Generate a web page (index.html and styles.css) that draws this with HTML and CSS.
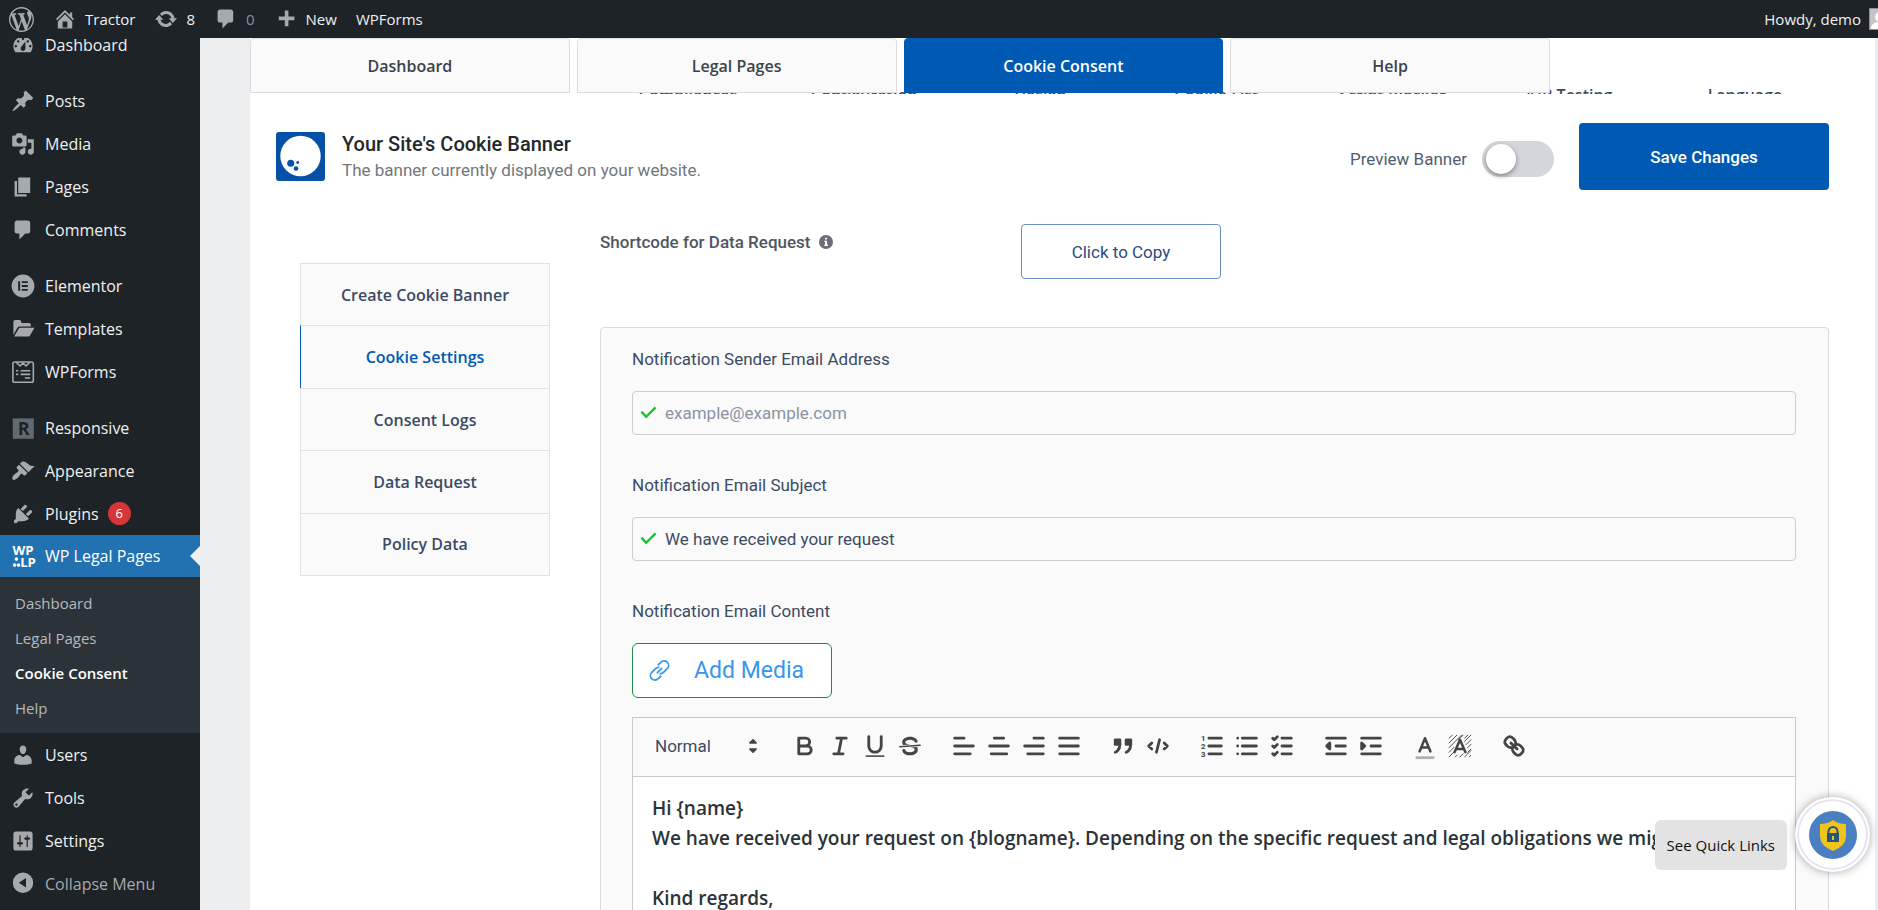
FILE: index.html
```html
<!DOCTYPE html>
<html lang="en">
<head>
  <meta charset="UTF-8">
  <meta name="viewport" content="width=device-width, initial-scale=1.0">
  <title>Cookie Consent - Tractor</title>
  <link rel="stylesheet" href="styles.css">
</head>
<body>
  <!-- Top admin bar -->
  <header class="admin-bar">
    <a class="bar-item" href="#" aria-label="About WordPress">
      <svg class="bar-logo" viewBox="0 0 20 20"><path d="M20 10c0-5.51-4.49-10-10-10C4.48 0 0 4.49 0 10c0 5.52 4.48 10 10 10 5.51 0 10-4.48 10-10zM7.78 15.37L4.37 6.22c.55-.02 1.17-.08 1.17-.08.5-.06.44-1.13-.06-1.11 0 0-1.45.11-2.37.11-.18 0-.37 0-.58-.01C4.12 2.69 6.87 1.11 10 1.11c2.33 0 4.45.87 6.05 2.34-.68-.11-1.65.39-1.65 1.58 0 .74.45 1.36.9 2.1.35.61.55 1.36.55 2.46 0 1.49-1.4 5-1.4 5l-3.03-8.37c.54-.02.82-.17.82-.17.5-.05.44-1.25-.06-1.22 0 0-1.44.12-2.38.12-.87 0-2.33-.12-2.33-.12-.5-.03-.56 1.2-.06 1.22l.92.08 1.26 3.41zM17.41 10c.24-.64.74-1.87.43-4.25.7 1.29 1.05 2.71 1.05 4.25 0 3.29-1.73 6.24-4.4 7.78.97-2.59 1.94-5.2 2.92-7.78zM6.1 18.09C3.12 16.65 1.11 13.53 1.11 10c0-1.3.23-2.48.72-3.59C3.25 10.3 4.67 14.2 6.1 18.09zm4.03-6.63l2.58 6.98c-.86.29-1.76.45-2.71.45-.79 0-1.57-.11-2.29-.33.81-2.38 1.62-4.74 2.42-7.1z"/></svg>
    </a>
    <a class="bar-item" href="#">
      <svg viewBox="0 0 20 20"><path d="M16 8.5l1.53 1.53-1.06 1.06L10 4.6l-6.47 6.49-1.06-1.06L10 2.5l4 4v-2h2v4zm-6-2.46l6 5.99V18H4v-5.97zM12 17v-5H8v5h4z"/></svg>
      Tractor
    </a>
    <a class="bar-item" href="#">
      <svg viewBox="0 0 20 20"><path d="M10.2 3.28c3.53 0 6.43 2.61 6.92 6h2.08l-3.5 4-3.5-4h2.32c-.45-1.97-2.21-3.45-4.32-3.45-1.45 0-2.73.71-3.54 1.78L4.95 5.66C6.23 4.2 8.11 3.28 10.2 3.28zm-.4 13.44c-3.52 0-6.43-2.61-6.92-6H.8l3.5-4c1.17 1.33 2.33 2.67 3.5 4H5.48c.45 1.97 2.21 3.45 4.32 3.45 1.45 0 2.73-.71 3.54-1.78l1.71 1.95c-1.28 1.46-3.15 2.38-5.25 2.38z"/></svg>
      8
    </a>
    <a class="bar-item muted" href="#">
      <svg viewBox="0 0 20 20"><path d="M5 2h9c1.1 0 2 .9 2 2v7c0 1.1-.9 2-2 2h-2l-5 5v-5H5c-1.1 0-2-.9-2-2V4c0-1.1.9-2 2-2z"/></svg>
      0
    </a>
    <a class="bar-item" href="#">
      <svg viewBox="0 0 20 20"><path d="M17 8v3h-5v5H9v-5H4V8h5V3h3v5h5z"/></svg>
      New
    </a>
    <a class="bar-item" href="#">WPForms</a>
    <a class="bar-item account" href="#">
      Howdy, demo
      <span class="avatar"><svg viewBox="0 0 20 20"><circle cx="10" cy="8" r="5"/><path d="M1 20c0-5 4-7 9-7s9 2 9 7z"/></svg></span>
    </a>
  </header>

  <div class="shell">
    <!-- Admin menu -->
    <nav class="admin-menu">
      <ul class="menu-list">
        <li><a class="menu-item" href="#"><svg viewBox="0 0 20 20"><path d="M3.76 16h12.48c1.1-1.37 1.76-3.11 1.76-5 0-4.42-3.58-8-8-8s-8 3.58-8 8c0 1.89.66 3.63 1.76 5zM10 4c.55 0 1 .45 1 1s-.45 1-1 1-1-.45-1-1 .45-1 1-1zM6 6c.55 0 1 .45 1 1s-.45 1-1 1-1-.45-1-1 .45-1 1-1zm8 0c.55 0 1 .45 1 1s-.45 1-1 1-1-.45-1-1 .45-1 1-1zm-5.37 5.55L12 7v6c0 1.1-.9 2-2 2s-2-.9-2-2c0-.57.24-1.08.63-1.45zM4 10c.55 0 1 .45 1 1s-.45 1-1 1-1-.45-1-1 .45-1 1-1zm12 0c.55 0 1 .45 1 1s-.45 1-1 1-1-.45-1-1 .45-1 1-1z"/></svg>Dashboard</a></li>
        <li class="gap"><a class="menu-item" href="#"><svg viewBox="0 0 20 20"><path d="M10.44 3.02l1.82-1.82 6.36 6.35-1.83 1.82c-1.05-.68-2.48-.57-3.41.36l-.75.75c-.92.93-1.04 2.35-.35 3.41l-1.83 1.82-2.41-2.41-2.8 2.79c-.42.42-3.38 2.71-3.8 2.29s1.86-3.39 2.28-3.81l2.79-2.79L4.1 9.36l1.83-1.82c1.05.69 2.48.57 3.4-.36l.75-.75c.93-.92 1.05-2.35.36-3.41z"/></svg>Posts</a></li>
        <li><a class="menu-item" href="#"><svg viewBox="0 0 20 20"><path d="M13 11V4c0-.55-.45-1-1-1h-1.67L9 1H5L3.67 3H2c-.55 0-1 .45-1 1v7c0 .55.45 1 1 1h10c.55 0 1-.45 1-1zM7 4.5c1.38 0 2.5 1.12 2.5 2.5S8.38 9.5 7 9.5 4.5 8.38 4.5 7 5.62 4.5 7 4.5zM14 6h5v10.5c0 1.38-1.12 2.5-2.5 2.5S14 17.88 14 16.5s1.12-2.5 2.5-2.5c.17 0 .34.02.5.05V9h-3V6zm-4 8.05V13h2v3.5c0 1.38-1.12 2.5-2.5 2.5S7 17.88 7 16.5 8.12 14 9.5 14c.17 0 .34.02.5.05z"/></svg>Media</a></li>
        <li><a class="menu-item" href="#"><svg viewBox="0 0 20 20"><path d="M6 15V2h10v13H6zm-1 1h8v2H3V5h2v11z"/></svg>Pages</a></li>
        <li><a class="menu-item" href="#"><svg viewBox="0 0 20 20"><path d="M5 2h9c1.1 0 2 .9 2 2v7c0 1.1-.9 2-2 2h-2l-5 5v-5H5c-1.1 0-2-.9-2-2V4c0-1.1.9-2 2-2z"/></svg>Comments</a></li>
        <li class="gap"><a class="menu-item" href="#"><svg viewBox="0 0 20 20"><path fill-rule="evenodd" d="M10 0.5a9.5 9.5 0 1 0 0 19a9.5 9.5 0 0 0 0-19zM6 6h1.6v8H6zM9 6h5v1.6H9zM9 9.2h5v1.6H9zM9 12.4h5V14H9z"/></svg>Elementor</a></li>
        <li><a class="menu-item" href="#"><svg viewBox="0 0 20 20"><path d="M2 15V4q0-1.5 1.5-1.5H7q1.5 0 1.5 1.5v1H15q1.5 0 1.5 1.5V8H7.5Q6 8 5.2 9.2zM2.6 16.2L6.4 9.8Q6.8 9 7.8 9H19.5L16 15.2Q15.4 16.2 14.3 16.2z"/></svg>Templates</a></li>
        <li><a class="menu-item" href="#"><svg class="outline" viewBox="0 0 20 20"><rect x="1.6" y="1.6" width="17" height="17" rx="1.5"/><path d="M4.500 2l3 3 2.500-2.500L12.500 5l3-3M4.200 9H6M8 9h8M4.200 12H6M8 12h8M11.500 15H16"/></svg>WPForms</a></li>
        <li class="gap"><a class="menu-item" href="#"><svg class="dim" viewBox="0 0 20 20"><rect x="1.5" y="2" width="17.5" height="17"/><text class="letter-dark" x="10.5" y="16" font-size="15">R</text></svg>Responsive</a></li>
        <li><a class="menu-item" href="#"><svg viewBox="0 0 20 20"><path d="M14.48 11.06L7.41 3.99l1.5-1.5c.5-.56 2.3-.47 3.51.32 1.21.8 1.43 1.28 2.91 2.1 1.18.64 2.45 1.26 4.45.85zm-.71.71L6.7 4.7 4.93 6.47c-.39.39-.39 1.02 0 1.41l1.06 1.06c.39.39.39 1.03 0 1.42-.6.6-1.43 1.11-2.21 1.69-.35.26-.7.53-1.01.84C1.43 14.23.4 16.08 1.4 17.07c.99 1 2.84-.03 4.18-1.36.31-.31.58-.66.85-1.02.57-.78 1.08-1.61 1.69-2.21.39-.39 1.02-.39 1.41 0l1.06 1.06c.39.39 1.02.39 1.41 0z"/></svg>Appearance</a></li>
        <li><a class="menu-item" href="#"><svg viewBox="0 0 20 20"><path d="M13.11 4.36L9.87 7.6 8 5.73l3.24-3.24c.35-.34 1.05-.2 1.56.32.52.51.66 1.21.31 1.55zm-8 1.77l.91-1.12 9.01 9.01-1.19.84c-.71.71-2.63 1.16-3.82 1.16H6.14L4.9 17.26c-.59.59-1.54.59-2.12 0-.59-.58-.59-1.53 0-2.12l1.24-1.24v-3.88c0-1.13.4-3.19 1.09-3.89zm7.26 3.97l3.24-3.24c.34-.35 1.04-.21 1.55.31.52.51.66 1.21.31 1.55l-3.24 3.25z"/></svg>Plugins <span class="count">6</span></a></li>
        <li>
          <a class="menu-item current" href="#"><svg viewBox="0 0 20 20"><text class="letter-light" x="10" y="9" font-size="11">WP</text><circle cx="4.5" cy="12.6" r="1.5"/><circle cx="3" cy="17.6" r="1.5"/><circle cx="6.3" cy="17.6" r="1.5"/><text class="letter-light" x="14.2" y="19.2" font-size="11">LP</text></svg>WP Legal Pages</a>
          <ul class="submenu">
            <li><a href="#">Dashboard</a></li>
            <li><a href="#">Legal Pages</a></li>
            <li><a class="selected" href="#">Cookie Consent</a></li>
            <li><a href="#">Help</a></li>
          </ul>
        </li>
        <li><a class="menu-item" href="#"><svg viewBox="0 0 20 20"><path d="M10 9.25c-2.27 0-2.73-3.44-2.73-3.44C7 4.02 7.82 2 9.97 2c2.16 0 2.98 2.02 2.71 3.81 0 0-.41 3.44-2.68 3.44zm0 2.57L12.72 10c2.39 0 4.52 2.33 4.52 4.53v2.49s-3.65 1.13-7.24 1.13c-3.65 0-7.24-1.13-7.24-1.13v-2.49c0-2.25 1.94-4.48 4.47-4.48z"/></svg>Users</a></li>
        <li><a class="menu-item" href="#"><svg viewBox="0 0 20 20"><path d="M16.68 9.77c-1.34 1.34-3.3 1.67-4.95.99l-5.41 6.52c-.99.99-2.59.99-3.58 0s-.99-2.59 0-3.57l6.52-5.42c-.68-1.65-.35-3.61.99-4.95 1.28-1.28 3.12-1.62 4.72-1.06l-2.89 2.89 2.82 2.82 2.86-2.87c.53 1.58.18 3.39-1.08 4.65zM3.81 16.21c.4.39 1.04.39 1.43 0 .4-.4.4-1.04 0-1.43-.39-.4-1.03-.4-1.43 0-.39.39-.39 1.03 0 1.43z"/></svg>Tools</a></li>
        <li><a class="menu-item" href="#"><svg viewBox="0 0 20 20"><path d="M18 16V4c0-1.1-.9-2-2-2H4c-1.1 0-2 .9-2 2v12c0 1.1.9 2 2 2h12c1.1 0 2-.9 2-2zM8 11h1c.55 0 1 .45 1 1s-.45 1-1 1H8v1.5c0 .28-.22.5-.5.5s-.5-.22-.5-.5V13H6c-.55 0-1-.45-1-1s.45-1 1-1h1V5.5c0-.28.22-.5.5-.5s.5.22.5.5V11zm5-2h-1c-.55 0-1-.45-1-1s.45-1 1-1h1V5.5c0-.28.22-.5.5-.5s.5.22.5.5V7h1c.55 0 1 .45 1 1s-.45 1-1 1h-1v5.5c0 .28-.22.5-.5.5s-.5-.22-.5-.5V9z"/></svg>Settings</a></li>
        <li><button class="menu-item collapse" type="button"><svg viewBox="0 0 20 20"><path fill-rule="evenodd" d="M10 0.5a8.5 8.5 0 1 0 0 17a8.5 8.5 0 0 0 0-17zM12.5 5v8L6.5 9z"/></svg>Collapse Menu</button></li>
      </ul>
    </nav>

    <main class="page">
      <nav class="top-tabs">
        <a class="top-tab" href="#">Dashboard</a>
        <a class="top-tab" href="#">Legal Pages</a>
        <a class="top-tab active" href="#">Cookie Consent</a>
        <a class="top-tab" href="#">Help</a>
      </nav>

      <nav class="settings-nav">
        <a class="active" href="#">Compliances</a>
        <a href="#">Configuration</a>
        <a href="#">Design</a>
        <a href="#">Cookie List</a>
        <a href="#">Script Blocker</a>
        <a href="#">A/B Testing</a>
        <a href="#">Language</a>
      </nav>

      <section class="banner-header">
        <svg class="banner-logo" viewBox="0 0 49 49"><rect width="49" height="49" rx="3" fill="#0750a8"/><circle cx="24.5" cy="24" r="20.2" fill="#fff"/><circle cx="14.7" cy="31.3" r="3.5" fill="#0750a8"/><circle cx="20" cy="36.5" r="2.3" fill="#0750a8"/><circle cx="21.7" cy="30.5" r="1.4" fill="#0750a8"/></svg>
        <div class="banner-title">
          <h1>Your Site's Cookie Banner</h1>
          <p>The banner currently displayed on your website.</p>
        </div>
        <label class="preview">
          Preview Banner
          <input class="toggle" type="checkbox">
        </label>
        <button class="save-button" type="button">Save Changes</button>
      </section>

      <div class="settings">
        <nav class="side-tabs">
          <a href="#">Create Cookie Banner</a>
          <a class="active" href="#">Cookie Settings</a>
          <a href="#">Consent Logs</a>
          <a href="#">Data Request</a>
          <a href="#">Policy Data</a>
        </nav>

        <div class="settings-body">
          <div class="shortcode">
            <span class="shortcode-label">Shortcode for Data Request
              <svg viewBox="0 0 16 16"><circle cx="8" cy="8" r="8" fill="#6c6c78"/><path d="M7 3h2.200v2.200H7zM6 6.600h3.200v4.600H10.300v1.500H6v-1.500H7V8H6z" fill="#fff"/></svg>
            </span>
            <button class="copy-button" type="button">Click to Copy</button>
          </div>

          <section class="panel">
            <label class="field-label" for="senderEmail">Notification Sender Email Address</label>
            <div class="field">
              <svg viewBox="0 0 18 14"><path d="M1.5 5.500l5 5.500L16.500 1"/></svg>
              <input type="email" id="senderEmail" placeholder="example@example.com">
            </div>

            <label class="field-label" for="emailSubject">Notification Email Subject</label>
            <div class="field">
              <svg viewBox="0 0 18 14"><path d="M1.5 5.500l5 5.500L16.500 1"/></svg>
              <input type="text" id="emailSubject" value="We have received your request">
            </div>

            <span class="field-label content-label">Notification Email Content</span>
            <button class="media-button" type="button">
              <svg viewBox="0 0 24 24"><path d="M10 6l3.500-3.300a5 5 0 0 1 7.500 7l-4.500 4.500a5 5 0 0 1-4.500 1.300M14 18l-3.500 3.300a5 5 0 0 1-7.500-7l4.500-4.500a5 5 0 0 1 4.500-1.300M9 15l6-6"/></svg>
              Add Media
            </button>

            <div class="editor">
              <div class="toolbar">
                <div class="picker">
                  <select aria-label="Text style"><option>Normal</option></select>
                  <svg viewBox="0 0 18 18"><polygon points="7 11 9 13 11 11"/><polygon points="7 7 9 5 11 7"/></svg>
                </div>
                <div class="tool-group">
                  <button type="button" aria-label="Bold"><svg viewBox="0 0 18 18"><path d="M5 4h4.500a2.500 2.500 0 0 1 0 5H5zM5 9h5.500a2.500 2.500 0 0 1 0 5H5z"/></svg></button>
                  <button type="button" aria-label="Italic"><svg viewBox="0 0 18 18"><path d="M7 4h6M5 14h6M8 14l2-10"/></svg></button>
                  <button type="button" aria-label="Underline"><svg viewBox="0 0 18 18"><path d="M5 3v6a4 4 0 0 0 8 0V3"/><rect class="fill" x="3" y="15" width="12" height="1"/></svg></button>
                  <button type="button" aria-label="Strike"><svg viewBox="0 0 18 18"><path class="thin" d="M2.5 9.5l13-1"/><path class="fill" d="M9.007 8C6.542 7.791 6 7.519 6 6.5 6 5.792 7.283 5 9 5c1.571 0 2.765.679 2.969 1.309a1 1 0 0 0 1.9-.617C13.356 4.106 11.354 3 9 3 6.2 3 4 4.538 4 6.5a3.2 3.2 0 0 0 .5 1.843zM8.984 10C11.457 10.208 12 10.479 12 11.5c0 .708-1.283 1.5-3 1.5-1.571 0-2.765-.679-2.969-1.309a1 1 0 1 0-1.9.617C4.644 13.894 6.646 15 9 15c2.8 0 5-1.538 5-3.5a3.2 3.2 0 0 0-.5-1.843z"/></svg></button>
                </div>
                <div class="tool-group">
                  <button type="button" aria-label="Align left"><svg viewBox="0 0 18 18"><path d="M3 9h12M3 14h10M3 4h6"/></svg></button>
                  <button type="button" aria-label="Align center"><svg viewBox="0 0 18 18"><path d="M3 9h12M4 14h10M6 4h6"/></svg></button>
                  <button type="button" aria-label="Align right"><svg viewBox="0 0 18 18"><path d="M3 9h12M5 14h10M9 4h6"/></svg></button>
                  <button type="button" aria-label="Justify"><svg viewBox="0 0 18 18"><path d="M3 9h12M3 14h12M3 4h12"/></svg></button>
                </div>
                <div class="tool-group">
                  <button type="button" aria-label="Quote"><svg viewBox="0 0 18 18"><path class="solid" d="M4 5h3v3H4zM11 5h3v3h-3z"/><path d="M7 8c0 4.031-3 5-3 5M14 8c0 4.031-3 5-3 5"/></svg></button>
                  <button type="button" aria-label="Code"><svg viewBox="0 0 18 18"><path d="M5 7L3 9l2 2M13 7l2 2-2 2M10 5L8 13"/></svg></button>
                </div>
                <div class="tool-group">
                  <button type="button" aria-label="Numbered list"><svg viewBox="0 0 18 18"><path d="M7 4h8M7 9h8M7 14h8"/><text x="3.4" y="6" font-size="5">1</text><text x="3.4" y="11" font-size="5">2</text><text x="3.4" y="16" font-size="5">3</text></svg></button>
                  <button type="button" aria-label="Bulleted list"><svg viewBox="0 0 18 18"><path d="M6 4h9M6 9h9M6 14h9M3 4h0M3 9h0M3 14h0"/></svg></button>
                  <button type="button" aria-label="Check list"><svg viewBox="0 0 18 18"><path d="M9 4h6M9 9h6M9 14h6M3 4l1 1 2-2M3 9l1 1 2-2M3 14l1 1 2-2"/></svg></button>
                </div>
                <div class="tool-group">
                  <button type="button" aria-label="Outdent"><svg viewBox="0 0 18 18"><path d="M3 14h12M3 4h12M9 9h6"/><path class="solid" d="M5 7v4L3 9z"/></svg></button>
                  <button type="button" aria-label="Indent"><svg viewBox="0 0 18 18"><path d="M3 14h12M3 4h12M9 9h6"/><path class="solid" d="M3 7v4l2-2z"/></svg></button>
                </div>
                <div class="tool-group">
                  <button type="button" aria-label="Text color"><svg viewBox="0 0 18 18"><path class="light" d="M3 16.500h12"/><path class="mid" d="M5.500 12.500L9 4l3.500 8.500M6.500 10h5"/></svg></button>
                  <button type="button" aria-label="Background color"><svg viewBox="0 0 18 18"><path class="hatch" d="M2 4l2-2M2 7l5-5M2 10l8-8M2 13l3-3M2 16l4-4M6 16l1-1M8 5l3-3M12 4l2-2M12 6l4-4M13 8l3-3M14 10l2-2M14 13l2-2M9 16l2-2M12 16l4-4M15 16l1-1"/><path class="mid" d="M5.500 13L9 5l3.500 8M6.500 11h5"/></svg></button>
                </div>
                <div class="tool-group">
                  <button type="button" aria-label="Link"><svg viewBox="0 0 18 18"><path d="M7 7l4 4M8.9 4.577a3.476 3.476 0 0 1 .36 4.679A3.476 3.476 0 0 1 4.577 8.9C3.185 7.5 2.035 6.4 4.217 4.217S7.5 3.185 8.9 4.577zM13.423 9.1a3.476 3.476 0 0 0-4.679-.36 3.476 3.476 0 0 0 .36 4.679c1.392 1.392 2.5 2.542 4.679.36s1.032-3.283-.36-4.679z"/></svg></button>
                </div>
              </div>
              <div class="editor-text" contenteditable="true">
                <p>Hi {name}</p>
                <p>We have received your request on {blogname}. Depending on the specific request and legal obligations we might</p>
                <p><br></p>
                <p>Kind regards,</p>
                <p><br></p>
              </div>
            </div>
          </section>
        </div>
      </div>
    </main>
  </div>

  <!-- Floating quick links -->
  <aside class="quick-links">
    <span class="quick-label">See Quick Links</span>
    <button class="quick-button" type="button" aria-label="Quick links">
      <svg viewBox="0 0 48 48"><circle cx="24" cy="24" r="24" fill="#4a7fc1"/><path d="M24 9q5 4 13 4v12q0 10-13 15q-13-5-13-15V13q8 0 13-4z" fill="#f0c419"/><path d="M19.500 23v-2.500a4.500 4.500 0 0 1 9 0V23" fill="none" stroke="#24567f" stroke-width="2"/><rect x="18" y="22" width="12" height="9" fill="#24567f"/><path d="M23 25h2v4h-2z" fill="#f0c419"/></svg>
    </button>
  </aside>
</body>
</html>
```
FILE: styles.css
```css
/* Reset default styles */
* {
  margin: 0;
  padding: 0;
  box-sizing: border-box;
}

body {
  font-family: "Open Sans", "Noto Sans", sans-serif;
  font-size: 16px;
  color: #3c434a;
  background: #ebedee;
  height: 100vh;
  overflow: hidden;
  display: flex;
  flex-direction: column;
}

a {
  color: inherit;
  text-decoration: none;
}

ul {
  list-style: none;
}

button,
input,
select {
  font: inherit;
  color: inherit;
}

button {
  cursor: pointer;
}

/* Admin bar */
.admin-bar {
  position: relative;
  z-index: 3;
  display: flex;
  align-items: center;
  flex-shrink: 0;
  gap: 19px;
  height: 38px;
  padding-left: 9px;
  background: #1d2327;
  color: #f0f0f1;
  font-size: 15px;
  overflow: hidden;
}

.bar-item {
  display: flex;
  align-items: center;
  gap: 8px;
  white-space: nowrap;
}

.bar-item svg {
  width: 24px;
  height: 24px;
  fill: #a7aaad;
}

.bar-item .bar-logo {
  width: 25px;
  height: 25px;
}

.bar-item.muted {
  color: #8c8f94;
}

.account {
  margin-left: auto;
  margin-right: -13px;
}

.avatar {
  width: 22px;
  height: 22px;
  background: #c3c4c7;
  border: 1px solid #8c8f94;
}

.bar-item .avatar svg {
  display: block;
  width: 20px;
  height: 20px;
  fill: #fff;
}

.shell {
  display: flex;
  flex: 1;
  min-height: 0;
}

/* Admin menu */
.admin-menu {
  width: 200px;
  flex-shrink: 0;
  background: #1d2327;
  color: #f0f0f1;
}

.menu-list {
  margin-top: -15px;
}

.gap {
  margin-top: 13px;
}

.menu-item {
  position: relative;
  display: flex;
  align-items: center;
  gap: 10px;
  width: 100%;
  height: 43px;
  padding-left: 11px;
}

.menu-item svg {
  width: 24px;
  height: 24px;
  fill: #a7aaad;
  flex-shrink: 0;
}

.menu-item svg.outline {
  fill: none;
  stroke: #a7aaad;
  stroke-width: 1.3;
}

.menu-item svg.dim {
  fill: #646970;
}

.letter-dark,
.letter-light {
  font-weight: 700;
  text-anchor: middle;
}

.letter-dark {
  fill: #1d2327;
}

.letter-light {
  fill: #fff;
}

.menu-item.current {
  height: 42px;
  background: #2271b1;
  color: #fff;
}

.menu-item.current svg {
  fill: #fff;
  overflow: visible;
}

/* Arrow pointing at the page */
.menu-item.current::after {
  content: "";
  position: absolute;
  right: 0;
  top: 11px;
  border: 10px solid transparent;
  border-left: 0;
  border-right-color: #f0f0f1;
}

.count {
  width: 23px;
  height: 23px;
  margin-left: -1px;
  border-radius: 50%;
  background: #d63638;
  color: #fff;
  font-size: 13px;
  line-height: 23px;
  text-align: center;
}

.submenu {
  padding: 9px 0 7px;
  background: #2c3338;
}

.submenu a {
  display: block;
  padding-left: 15px;
  font-size: 15px;
  line-height: 35px;
  color: #b4b9be;
}

.submenu a.selected {
  color: #fff;
  font-weight: 600;
}

.collapse {
  background: none;
  border: 0;
  color: #a7aaad;
}

/* Page */
.page {
  flex: 1;
  min-width: 0;
  margin-left: 50px;
  margin-right: 3px;
  background: #fff;
  overflow: hidden;
}

.top-tabs {
  position: relative;
  z-index: 1;
  display: grid;
  grid-template-columns: repeat(4, 1fr);
  gap: 7px;
  width: 80%;
}

.top-tab {
  height: 55px;
  border: 1px solid #dcdcde;
  border-radius: 4px 4px 0 0;
  background: #fafafa;
  font-size: 16px;
  font-weight: 600;
  line-height: 55px;
  text-align: center;
}

.top-tab.active {
  background: #0059b3;
  border-color: #0059b3;
  color: #fff;
}

.settings-nav {
  display: grid;
  grid-template-columns: repeat(7, 1fr);
  height: 8px;
  margin: -7px 42px 0 350px;
  overflow: hidden;
  font-weight: 600;
  line-height: 18px;
  text-align: center;
  color: #3c4b64;
}

.settings-nav .active {
  color: #0059b3;
}

/* Banner header */
.banner-header {
  display: flex;
  align-items: center;
  height: 125px;
  padding: 0 46px 0 26px;
  background: #fff;
  font-family: Roboto, sans-serif;
}

.banner-logo {
  width: 49px;
  height: 49px;
  margin-right: 17px;
}

.banner-title {
  margin-right: auto;
}

.banner-title h1 {
  font-size: 20px;
  font-weight: 500;
  line-height: 26px;
  color: #23282d;
}

.banner-title p {
  font-size: 17px;
  line-height: 26px;
  color: #72777c;
}

.preview {
  display: flex;
  align-items: center;
  gap: 15px;
  margin: 5px 25px 0 0;
  font-size: 17px;
  color: #4f5d73;
}

.toggle {
  appearance: none;
  display: flex;
  align-items: center;
  width: 72px;
  height: 36px;
  padding: 0 4px;
  border-radius: 18px;
  background: #d5d5dc;
  cursor: pointer;
}

.toggle::before {
  content: "";
  width: 30px;
  height: 30px;
  border-radius: 50%;
  background: #fff;
  box-shadow: 0 2px 5px rgba(0, 0, 0, 0.4);
}

.toggle:checked {
  justify-content: flex-end;
  background: #0059b3;
}

.save-button {
  width: 250px;
  height: 67px;
  border: 0;
  border-radius: 4px;
  background: #0059b3;
  color: #fff;
  font-size: 17px;
  font-weight: 500;
}

/* Settings */
.settings {
  display: flex;
  align-items: flex-start;
  gap: 50px;
  padding: 5px 46px 0 50px;
}

.side-tabs {
  display: flex;
  flex-direction: column;
  flex-shrink: 0;
  width: 250px;
  min-height: 313px;
  margin-top: 39px;
  border: 1px solid #dfe1e4;
  border-top: 0;
  background: #fafafa;
  color: #3c4b64;
  font-weight: 600;
}

.side-tabs a {
  display: flex;
  flex: 1;
  align-items: center;
  justify-content: center;
  border-top: 1px solid #dfe1e4;
}

.side-tabs .active {
  margin-left: -1px;
  border-left: 1px solid #0059b3;
  color: #0059b3;
}

.settings-body {
  flex: 1;
  min-width: 0;
  font-family: Roboto, sans-serif;
  font-size: 17px;
  color: #3c4b64;
}

.shortcode {
  display: grid;
  grid-template-columns: 421px auto;
  justify-content: start;
  align-items: start;
}

.shortcode-label {
  display: flex;
  align-items: center;
  gap: 8px;
  font-weight: 500;
  line-height: 36px;
  color: #4f5661;
}

.shortcode-label svg {
  width: 14px;
  height: 14px;
}

.copy-button {
  width: 200px;
  height: 55px;
  border: 1px solid #6a8fc0;
  border-radius: 4px;
  background: #fff;
  color: #2c4a80;
}

.panel {
  margin-top: 48px;
  padding: 19px 32px 40px 31px;
  border: 1px solid #d8dbe0;
  border-radius: 4px;
  background: #fafafa;
}

.field-label {
  display: block;
  line-height: 24px;
}

.field {
  display: flex;
  align-items: center;
  gap: 8px;
  height: 44px;
  margin: 20px 0 38px;
  padding: 0 7px;
  border: 1px solid #ccced2;
  border-radius: 4px;
}

.field svg {
  width: 17px;
  height: 14px;
  fill: none;
  stroke: #1bc52f;
  stroke-width: 2.6;
}

.field input {
  flex: 1;
  border: 0;
  background: none;
  outline: none;
}

.field input::placeholder {
  color: #8a93a2;
}

.content-label {
  margin-bottom: 20px;
}

.media-button {
  display: flex;
  align-items: center;
  gap: 24px;
  width: 200px;
  height: 55px;
  padding-left: 16px;
  border: 1px solid #1f8a44;
  border-radius: 6px;
  background: #fff;
  color: #3a96e8;
  font-size: 23px;
}

.media-button svg {
  width: 21px;
  height: 21px;
  fill: none;
  stroke: #3a96e8;
  stroke-width: 2;
}

/* Rich text editor */
.editor {
  margin-top: 19px;
  border: 1px solid #c8cacc;
}

.toolbar {
  display: flex;
  align-items: center;
  height: 59px;
  padding: 0 0 2px 22px;
  border-bottom: 1px solid #c8cacc;
}

.picker {
  display: flex;
  align-items: center;
  justify-content: space-between;
  width: 112px;
  margin-right: 20px;
}

.picker select {
  appearance: none;
  border: 0;
  background: none;
  outline: none;
}

.toolbar svg {
  display: block;
  width: 28px;
  height: 28px;
  fill: none;
  stroke: #444;
  stroke-width: 2;
  stroke-linecap: round;
  stroke-linejoin: round;
}

.tool-group svg {
  stroke-width: 1.8;
}

.picker svg {
  stroke-width: 1;
}

.picker svg,
.toolbar .solid {
  fill: #444;
}

.toolbar .fill,
.toolbar text {
  fill: #444;
  stroke: none;
}

.toolbar text {
  font-weight: 700;
  text-anchor: middle;
}

.toolbar .thin {
  stroke-width: 1;
}

.toolbar .mid {
  stroke-width: 1.6;
}

.toolbar .hatch {
  stroke-width: 0.6;
}

.toolbar .light {
  opacity: 0.4;
  stroke-linecap: butt;
}

.tool-group {
  display: flex;
  margin-right: 19px;
}

.tool-group button {
  display: grid;
  place-items: center;
  width: 35px;
  height: 30px;
  border: 0;
  background: none;
}

.editor-text {
  padding: 16px 19px;
  background: #fff;
  color: #2c3338;
  font-family: "Open Sans", "Noto Sans", sans-serif;
  font-size: 19px;
  font-weight: 600;
  line-height: 30px;
  white-space: nowrap;
  overflow: hidden;
}

/* Quick links */
.quick-links {
  position: fixed;
  right: 8px;
  bottom: 38px;
  z-index: 2;
  display: flex;
  align-items: center;
  gap: 8px;
}

.quick-label {
  margin-top: 20px;
  padding: 0 12px;
  border-radius: 6px;
  background: #e3e3e3;
  color: #111;
  font-size: 15px;
  line-height: 50px;
}

.quick-button {
  display: grid;
  place-items: center;
  width: 75px;
  height: 75px;
  border: 2px solid #fff;
  border-radius: 50%;
  background: #fff;
  box-shadow: inset 0 0 0 2px #e6e2f5, 0 0 10px rgba(0, 0, 0, 0.35);
}

.quick-button svg {
  width: 48px;
  height: 48px;
}
```
